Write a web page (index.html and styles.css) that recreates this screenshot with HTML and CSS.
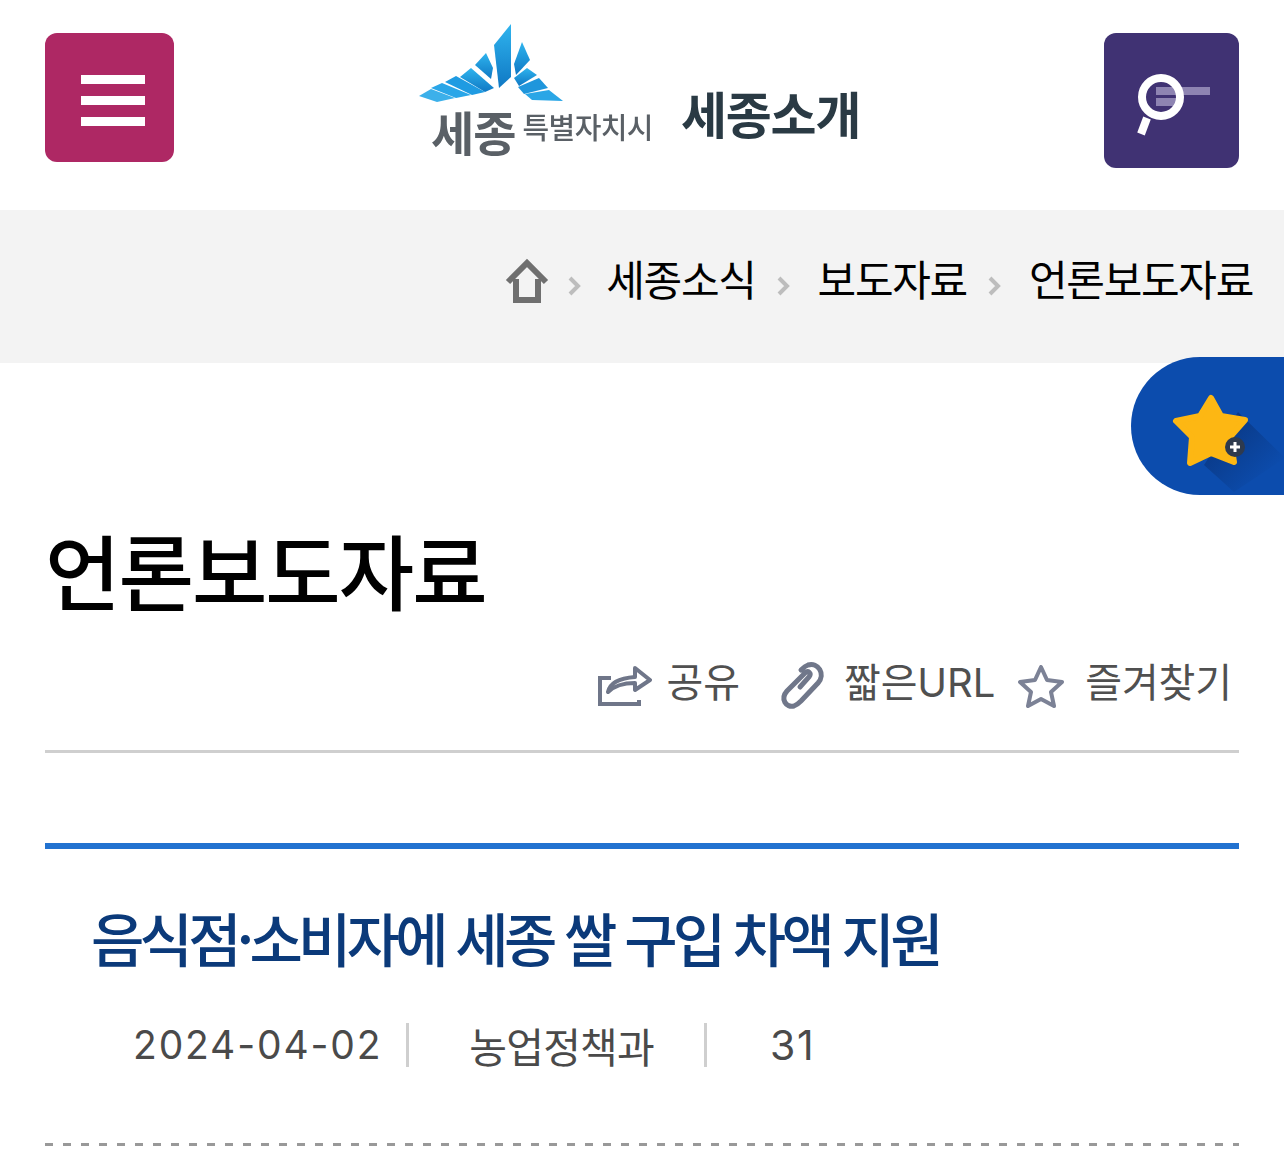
FILE: index.html
```html
<!DOCTYPE html>
<html lang="ko">
<head>
<meta charset="UTF-8">
<meta name="viewport" content="width=device-width, initial-scale=1.0">
<title>언론보도자료</title>
<link rel="stylesheet" href="styles.css">
</head>
<body>

<div class="header">
  <button class="menu-btn">
    <span></span><span></span><span></span>
  </button>
  <div class="logo">
    <div class="logo-mark">
      <svg width="146" height="84" viewBox="0 0 146 84">
        <defs>
          <linearGradient id="wing" x1="0" y1="0" x2="0" y2="1">
            <stop offset="0" stop-color="#2fb4ee"/>
            <stop offset="1" stop-color="#0f78c4"/>
          </linearGradient>
        </defs>
        <path fill="url(#wing)" d="M92 0 L75 21 L80 64 L92 53 Z"/>
        <path fill="url(#wing)" d="M103 18 L111 36 L97 51 L95 40 Z"/>
        <path fill="url(#wing)" d="M67 29 L74 44 L72 55 L56 41 Z"/>
        <path fill="url(#wing)" d="M52 44 L75 64 L66 68 L41 53 Z"/>
        <path fill="#1f9be2" d="M37 52 L66 68 L53 71 L26 58 Z"/>
        <path fill="#2aa6e8" d="M23 59 L52 71 L37 74 L12 64 Z"/>
        <path fill="#3cb0ea" d="M12 65 L36 74 L18 78 L0 72 Z"/>
        <path fill="url(#wing)" d="M108 44 L118 51 L100 62 L95 54 Z"/>
        <path fill="#1f96dc" d="M120 54 L129 64 L105 70 L99 63 Z"/>
        <path fill="#2aa6e6" d="M130 66 L144 77 L113 76 L106 70 Z"/>
      </svg>
      <div class="logo-city"><b>세종</b><span>특별자치시</span></div>
    </div>
    <div class="logo-title">세종소개</div>
  </div>
  <button class="search-btn">
    <svg width="76" height="64" viewBox="0 0 76 64">
      <rect x="21" y="8" width="54" height="8" fill="#8e84b2"/>
      <rect x="21" y="19" width="20" height="8" fill="#8e84b2"/>
      <circle cx="26" cy="18" r="19" fill="none" stroke="#fff" stroke-width="8"/>
      <path d="M12 39 L6 55" stroke="#fff" stroke-width="8" fill="none"/>
    </svg>
  </button>
</div>

<div class="breadcrumb">
  <svg class="home" width="44" height="44" viewBox="0 0 44 44">
    <path d="M3 23 L22 4 L41 23 M11 20 V41 H33 V20" fill="none" stroke="#6f6f6f" stroke-width="6"/>
  </svg>
  <svg class="sep" width="12" height="20" viewBox="0 0 12 20"><path d="M2 2 L10 10 L2 18" fill="none" stroke="#bdbdbd" stroke-width="4"/></svg>
  <span class="crumb">세종소식</span>
  <svg class="sep" width="12" height="20" viewBox="0 0 12 20"><path d="M2 2 L10 10 L2 18" fill="none" stroke="#bdbdbd" stroke-width="4"/></svg>
  <span class="crumb">보도자료</span>
  <svg class="sep" width="12" height="20" viewBox="0 0 12 20"><path d="M2 2 L10 10 L2 18" fill="none" stroke="#bdbdbd" stroke-width="4"/></svg>
  <span class="crumb">언론보도자료</span>
</div>

<a class="fav-float">
  <svg width="84" height="80" viewBox="0 0 84 80">
    <defs>
      <linearGradient id="fade" gradientUnits="userSpaceOnUse" x1="45" y1="45" x2="90" y2="90">
        <stop offset="0" stop-color="#0a3a88"/>
        <stop offset="1" stop-color="#0c4cad"/>
      </linearGradient>
    </defs>
    <path d="M66 19 L113 65 L62 99 L32 72 Z" fill="url(#fade)"/>
    <path d="M39 5 L49 23 L73 27 L58 44 L62 69 L39 60 L18 70 L20 44 L4 28 L28 23 Z" fill="#fdb713" stroke="#fdb713" stroke-width="6" stroke-linejoin="round"/>
    <circle cx="63" cy="54" r="10" fill="#2e3a4e"/>
    <path d="M63 49 V59 M58 54 H68" stroke="#fff" stroke-width="3"/>
  </svg>
</a>

<div class="content">
  <h1 class="page-title">언론보도자료</h1>

  <div class="tools">
    <a class="tool share">
      <svg width="56" height="46" viewBox="0 0 56 46">
        <path d="M14 15 H3 V41 H42 V37" fill="none" stroke="#6f7689" stroke-width="4"/>
        <path d="M11 29 C13 19 24 15 38 14 V5 L53 17 L38 27 V20 C28 20 18 22 11 29 Z" fill="none" stroke="#6f7689" stroke-width="4" stroke-linejoin="round"/>
      </svg>
      공유
    </a>
    <a class="tool">
      <svg width="46" height="46" viewBox="0 0 46 46">
        <path d="M20 24 L29 14 C32 10 28 7 25 10 L7 28 C0 36 6 45 14 43 C17 42 19 40 21 38 L38 20 C46 11 38 -1 28 2 C25 3 23 5 21 7" fill="none" stroke="#70778a" stroke-width="5" stroke-linecap="round"/>
      </svg>
      짧은URL
    </a>
    <a class="tool">
      <svg width="48" height="46" viewBox="0 0 48 46">
        <path d="M24 4 L30 17 L45 19 L34 29 L37 43 L24 36 L11 43 L14 29 L3 19 L18 17 Z" fill="none" stroke="#7c8296" stroke-width="4" stroke-linejoin="round"/>
      </svg>
      즐겨찾기
    </a>
  </div>

  <div class="view-head">
    <h2 class="view-title">음식점·소비자에 세종 쌀 구입 차액 지원</h2>
    <ul class="meta">
      <li class="num">2024-04-02</li>
      <li class="dept">농업정책과</li>
      <li class="num">31</li>
    </ul>
  </div>
</div>

</body>
</html>
```

FILE: styles.css
```css
* { box-sizing: border-box; }
html, body { height: 1149px; overflow: hidden; }
body { margin: 0; background: #fff; color: #000; font-family: "Noto Sans CJK KR", "Noto Sans", sans-serif; position: relative; }
button { border: none; padding: 0; cursor: pointer; }
a { color: inherit; text-decoration: none; }
svg { overflow: visible; }

.header { height: 210px; padding: 33px 45px 0; display: flex; align-items: flex-start; justify-content: space-between; }
.menu-btn { width: 129px; height: 129px; background: #ae2864; border-radius: 12px; display: flex; flex-direction: column; align-items: center; justify-content: center; gap: 12px; padding: 6px 0 0 7px; }
.menu-btn span { display: block; width: 64px; height: 9px; background: #fff; }
.search-btn { width: 135px; height: 135px; background: #403273; border-radius: 12px; display: flex; align-items: flex-start; justify-content: center; padding: 46px 0 0 3px; }

.logo { display: flex; align-items: flex-start; width: 440px; margin-top: -9px; filter: blur(0.6px); }
.logo-mark { width: 262px; flex: none; }
.logo-mark svg { display: block; }
.logo-city { display: flex; align-items: flex-start; padding-left: 12px; color: #5a6066; white-space: nowrap; height: 52px; line-height: 50px; margin-top: -2px; }
.logo-city b { font-size: 47px; letter-spacing: -1px; font-weight: 700; }
.logo-city span { font-size: 29px; letter-spacing: -0.6px; margin: 0 0 0 7px; font-weight: 500; line-height: 40px; }
.logo-title { font-size: 50px; font-weight: 700; color: #2a3a44; letter-spacing: -1.2px; line-height: 60px; margin-top: 58px; white-space: nowrap; }

.breadcrumb { height: 153px; background: #f3f3f3; display: flex; align-items: center; justify-content: flex-end; padding-right: 31px; padding-bottom: 18px; }
.home { margin-right: 19px; margin-top: 7px; filter: blur(0.4px); }
.crumb { font-size: 42px; line-height: 60px; letter-spacing: -1.3px; }
.sep { display: block; flex: none; margin: 17px 29px 0 0; filter: blur(0.4px); }
.crumb + .sep { margin-left: 21px; }
.home + .sep { margin-right: 26px; }

.fav-float { position: absolute; top: 357px; right: 0; width: 153px; height: 138px; background: #0c4cad; border-radius: 69px 0 0 69px; overflow: hidden; padding: 36px 0 0 41px; }
.fav-float svg { display: block; }

.content { padding: 0 45px; }
.page-title { margin: 151px 0 0; font-size: 82px; line-height: 110px; font-weight: 500; letter-spacing: -2px; }

.tools { display: flex; justify-content: flex-end; align-items: center; height: 103px; margin-top: 26px; padding-right: 7px; border-bottom: 3px solid #cfcfcf; padding-bottom: 35px; }
.tool { display: flex; align-items: center; gap: 18px; font-family: "Inter", "Noto Sans CJK KR", sans-serif; font-size: 40px; line-height: 56px; color: #505050; font-weight: 400; margin-left: 40px; letter-spacing: -0.1px; }
.tool.share { gap: 14px; }
.tool:last-child { margin-left: 22px; gap: 20px; }
.tool svg { flex: none; margin-top: 6px; filter: blur(0.5px); }

.view-head { margin-top: 90px; border-top: 6px solid #2272d0; padding: 46px 46px 0; }
.view-title { margin: 0; font-size: 58px; line-height: 84px; font-weight: 500; color: #0b3a7a; letter-spacing: -4.75px; white-space: nowrap; }
.meta { list-style: none; display: flex; align-items: center; margin: 44px 0 0; padding: 0 0 0 42px; color: #4a4a4a; height: 44px; }
.meta li { line-height: 44px; }
.meta .num { font-family: "Inter", sans-serif; font-size: 39px; letter-spacing: 1.85px; }
.meta .num:last-child { font-size: 41px; }
.meta .dept { font-size: 41px; letter-spacing: -0.8px; border-left: 3px solid #cfcfcf; border-right: 3px solid #cfcfcf; padding: 0 50px 0 60px; margin: 0 63px 0 24px; }
.content::after { content: ""; display: block; margin-top: 76px; height: 3px; background: repeating-linear-gradient(90deg, #999 0 8px, transparent 8px 18px); }
```
